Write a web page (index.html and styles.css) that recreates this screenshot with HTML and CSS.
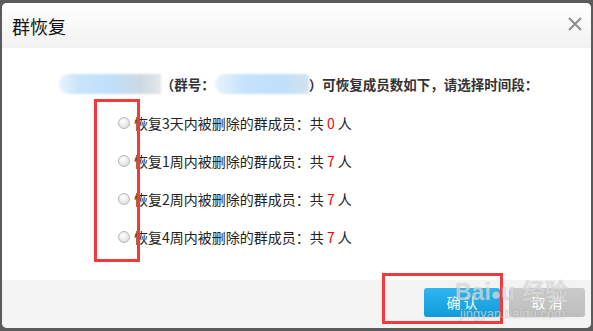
FILE: index.html
```html
<!DOCTYPE html>
<html lang="zh-CN">

<head>
  <meta charset="UTF-8">
  <title>群恢复</title>
  <link rel="stylesheet" href="styles.css">
</head>

<body>
  <div class="dialog">
    <div class="dialog-head">
      <h1>群恢复</h1>
      <button class="close-btn" aria-label="关闭">
        <svg width="14" height="14" viewBox="0 0 14 14">
          <path d="M1 1 L13 13 M13 1 L1 13" stroke="#8a8a8a" stroke-width="1.8" fill="none"/>
        </svg>
      </button>
    </div>

    <div class="dialog-body">
      <p class="intro">
        <span class="blur blur-name"></span>
        <span>（群号：</span>
        <span class="blur blur-id"></span>
        <span>）可恢复成员数如下，请选择时间段：</span>
      </p>

      <ul class="options">
        <li><span class="radio"></span>恢复3天内被删除的群成员：共 <em>0</em> 人</li>
        <li><span class="radio"></span>恢复1周内被删除的群成员：共 <em>7</em> 人</li>
        <li><span class="radio"></span>恢复2周内被删除的群成员：共 <em>7</em> 人</li>
        <li><span class="radio"></span>恢复4周内被删除的群成员：共 <em>7</em> 人</li>
      </ul>
    </div>

    <div class="dialog-foot">
      <button class="btn btn-ok">确 认</button>
      <button class="btn btn-cancel">取 消</button>
    </div>

    <div class="mark mark-radios"></div>
    <div class="mark mark-ok"></div>

    <div class="watermark">
      <div class="wm-top">Bai<span class="paw">●</span>u 经验</div>
      <div class="wm-url">jingyan.baidu.com</div>
    </div>
  </div>
</body>

</html>
```

FILE: styles.css
```css
* {
  box-sizing: border-box;
}

body {
  margin: 0;
  background: #5b5b5b;
  font-family: "Noto Sans CJK SC", "Noto Sans", sans-serif;
  color: #333;
  height: 331px;
  overflow: hidden;
}

.dialog {
  position: relative;
  margin: 3px 2px 0 2px;
  width: 589px;
  height: 325px;
  background: #fff;
  border-radius: 5px;
  overflow: hidden;
  display: flex;
  flex-direction: column;
}

.dialog-head {
  height: 45px;
  background: linear-gradient(to bottom, #ffffff, #f2f2f2);
  display: flex;
  align-items: center;
  justify-content: space-between;
  padding: 0 9px 0 10px;
}

.dialog-head h1 {
  margin: 0;
  font-size: 18px;
  font-weight: normal;
  color: #111;
}

.close-btn {
  background: none;
  border: none;
  padding: 0;
  width: 14px;
  height: 14px;
  display: flex;
  margin-bottom: 4px;
}

.dialog-body {
  flex: 1;
  padding-top: 26px;
}

.intro {
  margin: 0;
  display: flex;
  align-items: center;
  justify-content: center;
  font-size: 13.5px;
  font-weight: bold;
  color: #333;
  padding-left: 4px;
}

.blur {
  display: inline-block;
  height: 20px;
  background: linear-gradient(to right, #e8f3fd, #c8e4fb 20%, #bfe0fa 50%, #cdd9e2 80%, #e4e8ec);
  filter: blur(1px);
}

.blur-name {
  width: 102px;
  border-radius: 10px 0 0 10px;
}

.blur-id {
  width: 94px;
  border-radius: 10px 4px 4px 10px;
  background: linear-gradient(to right, #e8f3fd, #c6e3fb 30%, #bfe0fa 70%, #d3e2ee);
}

.options {
  list-style: none;
  margin: 10px 0 0 0;
  padding: 0 0 0 116px;
}

.options li {
  height: 38px;
  display: flex;
  align-items: center;
  font-size: 14px;
  color: #222;
  white-space: pre;
}

.options em {
  font-style: normal;
  color: #f00;
}

.radio {
  width: 12px;
  height: 12px;
  border-radius: 50%;
  border: 1px solid #b8b8b8;
  background: radial-gradient(circle at 40% 35%, #ffffff, #d6d6d6);
  margin-right: 4px;
  flex: none;
}

.dialog-foot {
  height: 48px;
  background: #f3f3f3;
  display: flex;
  align-items: center;
  justify-content: flex-end;
  gap: 9px;
  padding: 0 6px 4px 0;
}

.btn {
  width: 76px;
  height: 29px;
  border: none;
  border-radius: 3px;
  color: #fff;
  font-family: "Noto Sans CJK SC", sans-serif;
  font-size: 14px;
}

.btn-ok {
  background: linear-gradient(to bottom, #2fb6f0, #0f9bdb);
}

.btn-cancel {
  background: linear-gradient(to bottom, #cbcbcb, #bdbdbd);
}

.mark {
  position: absolute;
  border: 3px solid #f23a3a;
}

.mark-radios {
  left: 92px;
  top: 96px;
  width: 46px;
  height: 163px;
}

.mark-ok {
  left: 380px;
  top: 270px;
  width: 121px;
  height: 51px;
}

.watermark {
  position: absolute;
  left: 453px;
  top: 277px;
  color: rgba(255, 255, 255, 0.55);
  text-shadow: 0 0 1px rgba(120, 120, 120, 0.5);
  pointer-events: none;
}

.wm-top {
  font-family: "Liberation Sans", sans-serif;
  font-weight: bold;
  font-size: 23px;
  line-height: 25px;
}

.paw {
  font-size: 17px;
}

.wm-url {
  font-family: "Liberation Sans", sans-serif;
  font-size: 13px;
  line-height: 14px;
  padding-left: 5px;
}
```
